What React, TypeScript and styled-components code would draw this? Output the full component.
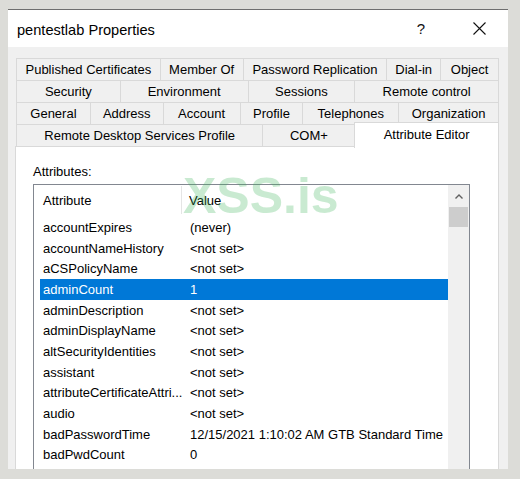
import React from 'react'
import styled, { createGlobalStyle } from 'styled-components'

const GlobalStyle = createGlobalStyle`
	html, body {
		margin: 0;
		padding: 0;
		background: #dcdcd8;
		height: 479px;
		overflow: hidden;
	}
	body {
		font-family: 'Liberation Sans', Arial, sans-serif;
		color: #000;
	}
`

const Screen = styled.div`
	position: relative;
	padding: 9px 0 0 8px;
	height: 479px;
	box-sizing: border-box;
`

const Window = styled.div`
	width: 500px;
	height: 460px;
	background: #f0f0f0;
	border-top: 1px solid #6e6e6e;
	box-sizing: border-box;
	overflow: hidden;
	display: flex;
	flex-direction: column;
`

const TitleBar = styled.div`
	height: 37px;
	flex: none;
	background: #fff;
	display: flex;
	align-items: center;
	padding-left: 9px;
`

const Title = styled.div`
	flex: 1;
	font-size: 14.6px;
	padding-top: 3px;
`

const TitleButton = styled.div`
	width: 58px;
	height: 37px;
	display: flex;
	align-items: center;
	justify-content: center;
	font-size: 15px;
	color: #111;
`

const Body = styled.div`
	flex: 1;
	display: flex;
	flex-direction: column;
	padding: 11px 9px 0 7px;
	min-height: 0;
`

const TabStrip = styled.div`
	display: flex;
	flex-direction: column;
	margin-left: 1px;
	flex: none;
`

const TabRow = styled.div`
	display: flex;
	height: 22px;
	align-items: flex-end;
`

const Tab = styled.div<{ $w: number; $active?: boolean }>`
	width: ${(p) => p.$w}px;
	box-sizing: border-box;
	height: ${(p) => (p.$active ? 26 : 23)}px;
	margin-left: -1px;
	margin-bottom: ${(p) => (p.$active ? -2 : -1)}px;
	border: 1px solid #d9d9d9;
	border-bottom: ${(p) => (p.$active ? 'none' : '1px solid #d9d9d9')};
	background: ${(p) => (p.$active ? '#fff' : '#f0f0f0')};
	position: relative;
	z-index: ${(p) => (p.$active ? 2 : 1)};
	font-size: 13px;
	display: flex;
	justify-content: center;
	align-items: ${(p) => (p.$active ? 'flex-start' : 'center')};
	padding-top: ${(p) => (p.$active ? 4 : 0)}px;
	white-space: nowrap;
	&:first-child {
		margin-left: 0;
	}
`

const Panel = styled.div`
	flex: 1;
	background: #fff;
	border: 1px solid #d9d9d9;
	border-bottom: none;
	padding: 17px 0 0 17px;
	position: relative;
	z-index: 1;
	min-height: 0;
`

const Label = styled.div`
	font-size: 13px;
	line-height: 16px;
	margin-bottom: 4px;
`

const ListBox = styled.div`
	width: 437px;
	height: 300px;
	box-sizing: border-box;
	border: 1px solid #828790;
	display: flex;
`

const ListContent = styled.div`
	flex: 1;
	padding-left: 6px;
	font-size: 13px;
`

const Header = styled.div`
	display: flex;
	height: 32px;
	align-items: stretch;
`

const HeaderCell = styled.div<{ $w?: number }>`
	width: ${(p) => (p.$w ? `${p.$w}px` : 'auto')};
	flex: ${(p) => (p.$w ? 'none' : '1')};
	display: flex;
	align-items: center;
	padding-left: ${(p) => (p.$w ? 3 : 7)}px;
	box-sizing: border-box;
	border-right: ${(p) => (p.$w ? '1px solid #e5e5e5' : 'none')};
	margin: 1px 0 3px;
`

const Row = styled.div<{ $selected?: boolean }>`
	display: grid;
	grid-template-columns: 147px 1fr;
	height: 20.7px;
	align-items: center;
	background: ${(p) => (p.$selected ? '#0078d7' : 'transparent')};
	color: ${(p) => (p.$selected ? '#fff' : '#000')};
	white-space: nowrap;
	span {
		padding-left: 3px;
		overflow: hidden;
	}
`

const ScrollBar = styled.div`
	width: 21px;
	flex: none;
	background: #f0f0f0;
	display: flex;
	flex-direction: column;
	padding-top: 1px;
`

const ScrollArrow = styled.div`
	height: 21px;
	display: flex;
	align-items: center;
	justify-content: center;
`

const Thumb = styled.div`
	height: 20px;
	margin: 0 1px;
	background: #cdcdcd;
`

const Watermark = styled.div`
	position: absolute;
	left: 183px;
	top: 171px;
	font-size: 50px;
	line-height: 50px;
	font-weight: bold;
	color: rgba(60, 180, 90, 0.28);
	pointer-events: none;
	z-index: 5;
`

const tabRows: { label: string; w: number; active?: boolean }[][] = [
	[
		{ label: 'Published Certificates', w: 145 },
		{ label: 'Member Of', w: 84 },
		{ label: 'Password Replication', w: 145 },
		{ label: 'Dial-in', w: 55 },
		{ label: 'Object', w: 59 },
	],
	[
		{ label: 'Security', w: 105 },
		{ label: 'Environment', w: 129 },
		{ label: 'Sessions', w: 108 },
		{ label: 'Remote control', w: 145 },
	],
	[
		{ label: 'General', w: 75 },
		{ label: 'Address', w: 74 },
		{ label: 'Account', w: 78 },
		{ label: 'Profile', w: 64 },
		{ label: 'Telephones', w: 97 },
		{ label: 'Organization', w: 101 },
	],
	[
		{ label: 'Remote Desktop Services Profile', w: 248 },
		{ label: 'COM+', w: 93 },
		{ label: 'Attribute Editor', w: 145, active: true },
	],
]

const attributes: [string, string][] = [
	['accountExpires', '(never)'],
	['accountNameHistory', '<not set>'],
	['aCSPolicyName', '<not set>'],
	['adminCount', '1'],
	['adminDescription', '<not set>'],
	['adminDisplayName', '<not set>'],
	['altSecurityIdentities', '<not set>'],
	['assistant', '<not set>'],
	['attributeCertificateAttri...', '<not set>'],
	['audio', '<not set>'],
	['badPasswordTime', '12/15/2021 1:10:02 AM GTB Standard Time'],
	['badPwdCount', '0'],
]

const CloseIcon = () => (
	<svg width="13" height="13" viewBox="0 0 13 13">
		<path d="M0.5 0.5 L12.5 12.5 M12.5 0.5 L0.5 12.5" stroke="#111" strokeWidth="1.1" fill="none" />
	</svg>
)

const UpIcon = () => (
	<svg width="8" height="5" viewBox="0 0 8 5">
		<path d="M0.5 4.5 L4 1 L7.5 4.5" stroke="#606060" strokeWidth="1.4" fill="none" />
	</svg>
)

export default function App() {
	return (
		<>
			<GlobalStyle />
			<Screen>
				<Window>
					<TitleBar>
						<Title>pentestlab Properties</Title>
						<TitleButton>?</TitleButton>
						<TitleButton>
							<CloseIcon />
						</TitleButton>
					</TitleBar>
					<Body>
						<TabStrip>
							{tabRows.map((row, i) => (
								<TabRow key={i}>
									{row.map((t) => (
										<Tab key={t.label} $w={t.w} $active={t.active}>
											{t.label}
										</Tab>
									))}
								</TabRow>
							))}
						</TabStrip>
						<Panel>
							<Label>Attributes:</Label>
							<ListBox>
								<ListContent>
									<Header>
										<HeaderCell $w={142}>Attribute</HeaderCell>
										<HeaderCell>Value</HeaderCell>
									</Header>
									{attributes.map(([name, value]) => (
										<Row key={name} $selected={name === 'adminCount'}>
											<span>{name}</span>
											<span>{value}</span>
										</Row>
									))}
								</ListContent>
								<ScrollBar>
									<ScrollArrow>
										<UpIcon />
									</ScrollArrow>
									<Thumb />
								</ScrollBar>
							</ListBox>
						</Panel>
					</Body>
				</Window>
				<Watermark>XSS.is</Watermark>
			</Screen>
		</>
	)
}
